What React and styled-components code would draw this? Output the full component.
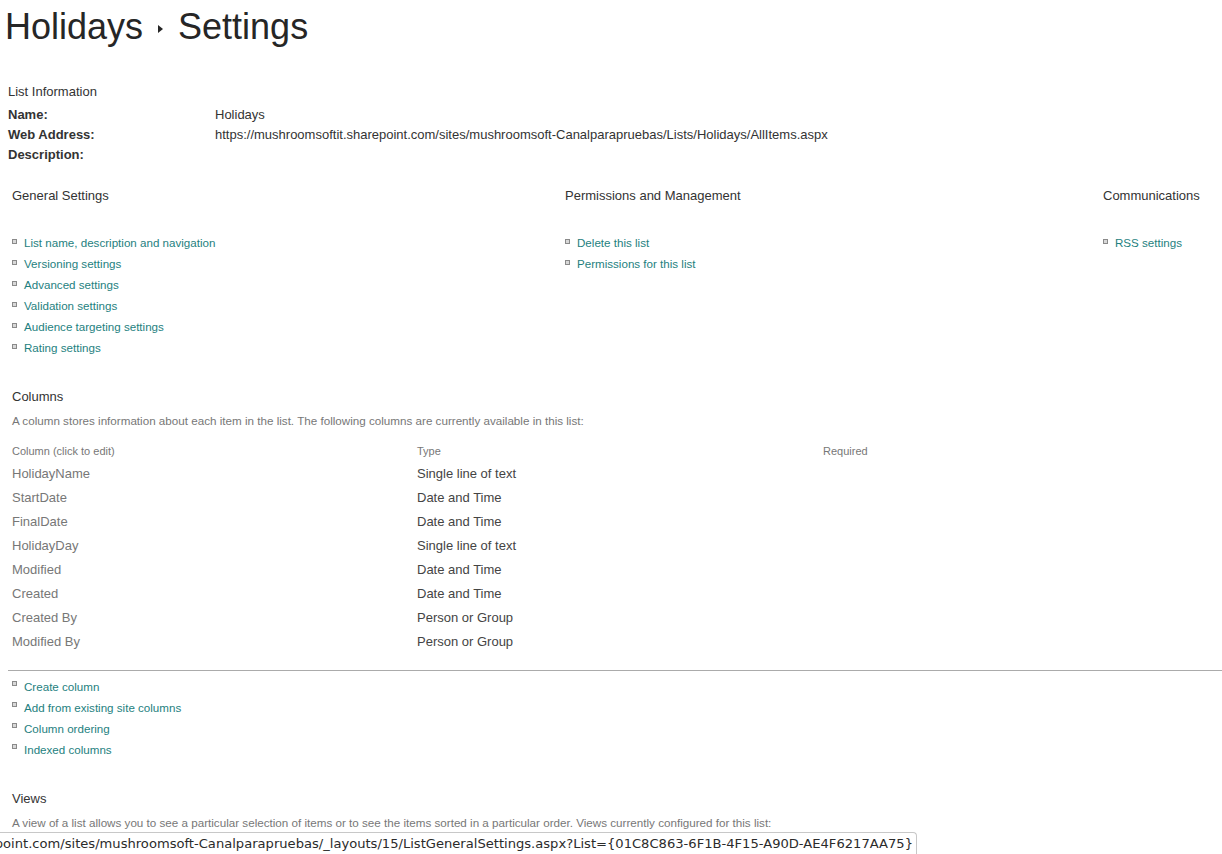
import React from 'react';
import styled, { createGlobalStyle } from 'styled-components';

// PAGE DEFAULTS
const GlobalStyle = createGlobalStyle`
  body {
    margin: 0;
    background: #fff;
    font-family: "Liberation Sans", Arial, sans-serif;
    color: #444;
  }
`;

const Page = styled.div`
  padding: 5px 0 40px 0;
`;

// TITLE
const Title = styled.h1`
  margin: 0 0 0 5px;
  font-size: 36px;
  font-weight: normal;
  line-height: 43px;
  color: #262626;
  display: flex;
  align-items: center;
  gap: 15px;
`;

const Crumb = styled.span`
  display: inline-block;
  width: 0;
  height: 0;
  border-top: 4px solid transparent;
  border-bottom: 4px solid transparent;
  border-left: 5px solid #262626;
  margin-top: 4px;
`;

// LIST INFORMATION
const InfoBlock = styled.div`
  margin: 34px 0 0 8px;
  font-size: 13px;
  line-height: 20px;
  color: #333;
`;

const InfoTitle = styled.div`
  margin-bottom: 3px;
`;

const InfoRow = styled.div`
  display: grid;
  grid-template-columns: 207px auto;
`;

const InfoLabel = styled.div`
  font-weight: bold;
`;

// SETTINGS COLUMNS
const SettingsGrid = styled.div`
  display: grid;
  grid-template-columns: 553px 538px auto;
  margin: 21px 0 0 12px;
`;

const SectionTitle = styled.div`
  font-size: 13px;
  line-height: 20px;
  color: #333;
  margin-bottom: ${(p) => p.gap ?? 26}px;
`;

const LinkList = styled.ul`
  list-style: none;
  margin: 0;
  padding: 0;
`;

const LinkItem = styled.li`
  display: flex;
  align-items: center;
  gap: 7px;
  font-size: 11.6px;
  line-height: 21px;
`;

const Bullet = styled.span`
  width: 3px;
  height: 3px;
  border: 1px solid #8a8a8a;
  background: #d8d8d8;
  flex: none;
  margin-top: ${(p) => (p.high ? -6 : -2)}px;
`;

const Link = styled.a`
  color: #1e7f80;
  text-decoration: none;
  cursor: pointer;
`;

// COLUMNS SECTION
const Section = styled.div`
  margin: ${(p) => p.top || 0}px 0 0 12px;
`;

const Description = styled.div`
  font-size: 11.65px;
  line-height: 16px;
  color: #777;
  margin-top: 6px;
`;

const ColumnTable = styled.div`
  display: grid;
  grid-template-columns: 405px 406px auto;
  margin-top: 14px;
`;

const HeadCell = styled.div`
  font-size: 11px;
  line-height: 16px;
  color: #777;
  margin-bottom: 3px;
`;

const Cell = styled.div`
  font-size: 13px;
  line-height: 24px;
  color: ${(p) => (p.muted ? '#777' : '#444')};
`;

const Divider = styled.hr`
  border: 0;
  border-top: 1px solid #ababab;
  margin: 16px 0 5px 8px;
`;

// BROWSER STATUS BAR
const StatusBar = styled.div`
  position: fixed;
  left: 0;
  bottom: 0;
  width: 917px;
  height: 22px;
  background: #fff;
  border: 1px solid #c8c8c8;
  border-left: 0;
  border-bottom: 0;
  border-top-right-radius: 4px;
  display: flex;
  justify-content: flex-end;
  align-items: center;
  overflow: hidden;
  white-space: nowrap;
  font-family: "DejaVu Sans", "Open Sans", sans-serif;
  font-size: 13.1px;
  color: #2b2b2b;
  padding-right: 3px;
  box-sizing: border-box;
`;

const generalLinks = [
  'List name, description and navigation',
  'Versioning settings',
  'Advanced settings',
  'Validation settings',
  'Audience targeting settings',
  'Rating settings',
];

const permissionLinks = ['Delete this list', 'Permissions for this list'];
const communicationLinks = ['RSS settings'];

const columns = [
  ['HolidayName', 'Single line of text'],
  ['StartDate', 'Date and Time'],
  ['FinalDate', 'Date and Time'],
  ['HolidayDay', 'Single line of text'],
  ['Modified', 'Date and Time'],
  ['Created', 'Date and Time'],
  ['Created By', 'Person or Group'],
  ['Modified By', 'Person or Group'],
];

const columnLinks = [
  'Create column',
  'Add from existing site columns',
  'Column ordering',
  'Indexed columns',
];

const Links = ({ items, high }) => (
  <LinkList>
    {items.map((item) => (
      <LinkItem key={item}>
        <Bullet high={high} />
        <Link>{item}</Link>
      </LinkItem>
    ))}
  </LinkList>
);

const App = () => {
  return (
    <Page>
      <GlobalStyle />
      <Title>
        <span>Holidays</span>
        <Crumb />
        <span>Settings</span>
      </Title>

      <InfoBlock>
        <InfoTitle>List Information</InfoTitle>
        <InfoRow>
          <InfoLabel>Name:</InfoLabel>
          <div>Holidays</div>
        </InfoRow>
        <InfoRow>
          <InfoLabel>Web Address:</InfoLabel>
          <div>
            https://mushroomsoftit.sharepoint.com/sites/mushroomsoft-Canalparapruebas/Lists/Holidays/AllItems.aspx
          </div>
        </InfoRow>
        <InfoRow>
          <InfoLabel>Description:</InfoLabel>
          <div />
        </InfoRow>
      </InfoBlock>

      <SettingsGrid>
        <div>
          <SectionTitle>General Settings</SectionTitle>
          <Links items={generalLinks} />
        </div>
        <div>
          <SectionTitle>Permissions and Management</SectionTitle>
          <Links items={permissionLinks} />
        </div>
        <div>
          <SectionTitle>Communications</SectionTitle>
          <Links items={communicationLinks} />
        </div>
      </SettingsGrid>

      <Section top={29}>
        <SectionTitle gap={0}>Columns</SectionTitle>
        <Description>
          A column stores information about each item in the list. The following columns are currently available in
          this list:
        </Description>
        <ColumnTable>
          <HeadCell>Column (click to edit)</HeadCell>
          <HeadCell>Type</HeadCell>
          <HeadCell>Required</HeadCell>
          {columns.map(([name, type]) => (
            <React.Fragment key={name}>
              <Cell muted>{name}</Cell>
              <Cell>{type}</Cell>
              <Cell />
            </React.Fragment>
          ))}
        </ColumnTable>
      </Section>

      <Divider />
      <Section>
        <Links items={columnLinks} high />
      </Section>

      <Section top={29}>
        <SectionTitle gap={0}>Views</SectionTitle>
        <Description>
          A view of a list allows you to see a particular selection of items or to see the items sorted in a
          particular order. Views currently configured for this list:
        </Description>
      </Section>

      <StatusBar>
        https://mushroomsoftit.sharepoint.com/sites/mushroomsoft-Canalparapruebas/_layouts/15/ListGeneralSettings.aspx?List=&#123;01C8C863-6F1B-4F15-A90D-AE4F6217AA75&#125;
      </StatusBar>
    </Page>
  );
};

export default App;
